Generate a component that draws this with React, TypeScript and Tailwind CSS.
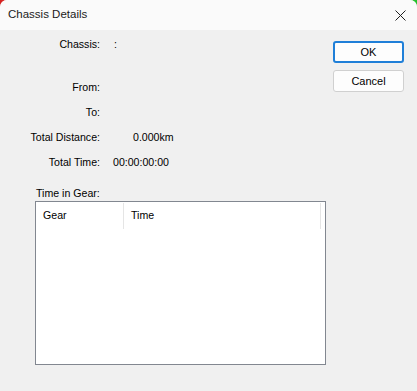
import React from "react";

const font = { fontFamily: '"Liberation Sans", Arial, sans-serif' };

function Row({ label, value, valueClass = "pl-[14px]" }: { label: string; value?: string; valueClass?: string }) {
  return (
    <div className="flex h-[25px] items-center">
      <span className="w-[100px] text-right">{label}</span>
      {value && <span className={valueClass}>{value}</span>}
    </div>
  );
}

export default function App() {
  return (
    <div className="w-[417px] h-[391px] bg-gradient-to-r from-[#d62020] via-[#f0f0f0] to-[#22c02a]" style={font}>
      <div className="w-full h-full rounded-t-[7px] overflow-hidden bg-[#f0f0f0] text-[10.6px] text-black flex flex-col">
        {/* title bar */}
        <div className="h-[30px] bg-[#fafafa] flex items-center justify-between pl-[8px] pr-[11px] shrink-0">
          <span className="text-[11.5px] leading-none text-[#1a1a1a]">Chassis Details</span>
          <svg width="11" height="11" viewBox="0 0 11 11" className="text-[#202020]">
            <path d="M0.5 0.5 L10.5 10.5 M10.5 0.5 L0.5 10.5" stroke="currentColor" strokeWidth="1" fill="none" />
          </svg>
        </div>

        <div className="flex flex-1">
          {/* left part */}
          <div className="flex-1 pt-[2px]">
            <Row label="Chassis:" value=":" />
            <div className="h-[18px]" />
            <Row label="From:" />
            <Row label="To:" />
            <Row label="Total Distance:" value="0.000km" valueClass="pl-[33px]" />
            <Row label="Total Time:" value="00:00:00:00" valueClass="pl-[13px]" />

            <div className="pl-[36px] pt-[11px]">
              <div className="h-[15px] leading-[15px]">Time in Gear:</div>
              <div className="ml-[-1px] w-[291px] h-[164px] border border-[#828790] bg-white">
                <div className="flex h-[26px] mt-[1px] items-stretch">
                  <div className="w-[88px] flex items-center pl-[7px] border-r border-[#e5e5e5]">Gear</div>
                  <div className="w-[197px] flex items-center pl-[7px] border-r border-[#e5e5e5]">Time</div>
                </div>
              </div>
            </div>
          </div>

          {/* buttons */}
          <div className="w-[84px] pt-[11px] flex flex-col gap-[7px]">
            <button className="w-[71px] h-[22px] rounded-[3px] border-2 border-[#1f7fd8] bg-[#fdfdfd] text-[11px] leading-none">
              OK
            </button>
            <button className="w-[71px] h-[22px] rounded-[3px] border border-[#d0d0d0] bg-[#fdfdfd] text-[11px] leading-none">
              Cancel
            </button>
          </div>
        </div>
      </div>
    </div>
  );
}
